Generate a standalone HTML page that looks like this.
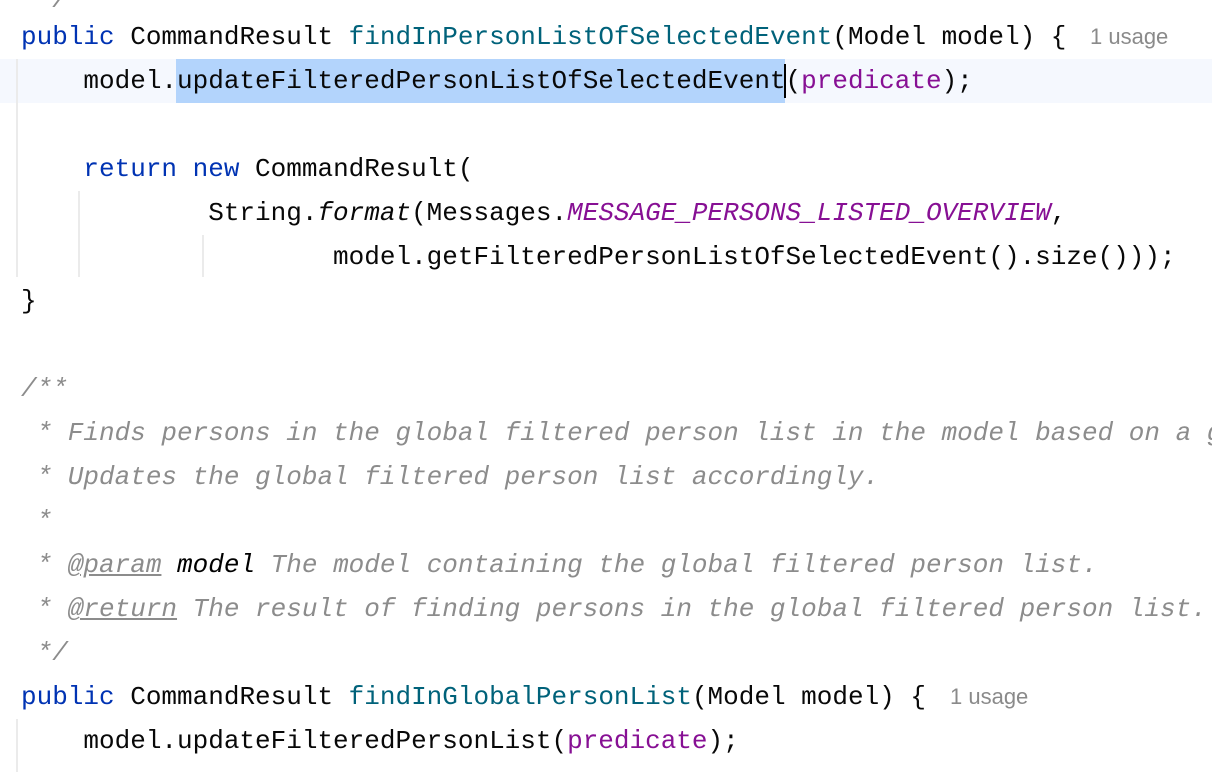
<!DOCTYPE html>
<html style="overflow:hidden"><head><style>
html,body{overflow:hidden}
body{margin:0;background:#fff;width:1212px;height:772px;position:relative;font-family:"Liberation Mono",monospace;font-size:26px;}
.l{position:absolute;left:21px;height:44px;line-height:44px;white-space:pre;color:#080808;}
.k{color:#0033b3}.f{color:#00627a}.p{color:#871094}.c{color:#8c8c8c;font-style:italic}
.u{text-decoration:underline}.i{font-style:italic}
.h{position:absolute;font-family:"Liberation Sans",sans-serif;font-size:22px;color:#8a8a8a;line-height:44px}
.g{position:absolute;width:2px;background:#ebebeb}
</style></head><body>
<div style="position:absolute;left:0;top:59px;width:1212px;height:44px;background:#f5f8fe"></div>
<div style="position:absolute;left:176px;top:59px;width:609px;height:44px;background:#b3d4fc"></div>
<div style="position:absolute;left:784px;top:64px;width:2px;height:34px;background:#000"></div>
<div class="g" style="left:16px;top:59px;height:218px"></div>
<div class="g" style="left:78px;top:191px;height:86px"></div>
<div class="g" style="left:202px;top:235px;height:42px"></div>
<div class="g" style="left:16px;top:719px;height:53px"></div>
<div class="l c" style="top:-22px"> */</div>
<div class="l" style="top:15px"><span class="k">public</span> CommandResult <span class="f">findInPersonListOfSelectedEvent</span>(Model model) {</div>
<div class="h" style="left:1090px;top:15px">1 usage</div>
<div class="l" style="top:59px">    model.updateFilteredPersonListOfSelectedEvent(<span class="p">predicate</span>);</div>
<div class="l" style="top:147px">    <span class="k">return new</span> CommandResult(</div>
<div class="l" style="top:191px">            String.<span class="i">format</span>(Messages.<span class="p i">MESSAGE_PERSONS_LISTED_OVERVIEW</span>,</div>
<div class="l" style="top:235px">                    model.getFilteredPersonListOfSelectedEvent().size()));</div>
<div class="l" style="top:279px">}</div>
<div class="l c" style="top:367px">/**</div>
<div class="l c" style="top:411px;width:1191px;overflow:hidden"> * Finds persons in the global filtered person list in the model based on a given</div>
<div class="l c" style="top:455px"> * Updates the global filtered person list accordingly.</div>
<div class="l c" style="top:499px"> *</div>
<div class="l c" style="top:543px"> * <span class="u">@param</span> <span style="color:#000">model</span> The model containing the global filtered person list.</div>
<div class="l c" style="top:587px"> * <span class="u">@return</span> The result of finding persons in the global filtered person list.</div>
<div class="l c" style="top:631px"> */</div>
<div class="l" style="top:675px"><span class="k">public</span> CommandResult <span class="f">findInGlobalPersonList</span>(Model model) {</div>
<div class="h" style="left:950px;top:675px">1 usage</div>
<div class="l" style="top:719px">    model.updateFilteredPersonList(<span class="p">predicate</span>);</div>
</body></html>
